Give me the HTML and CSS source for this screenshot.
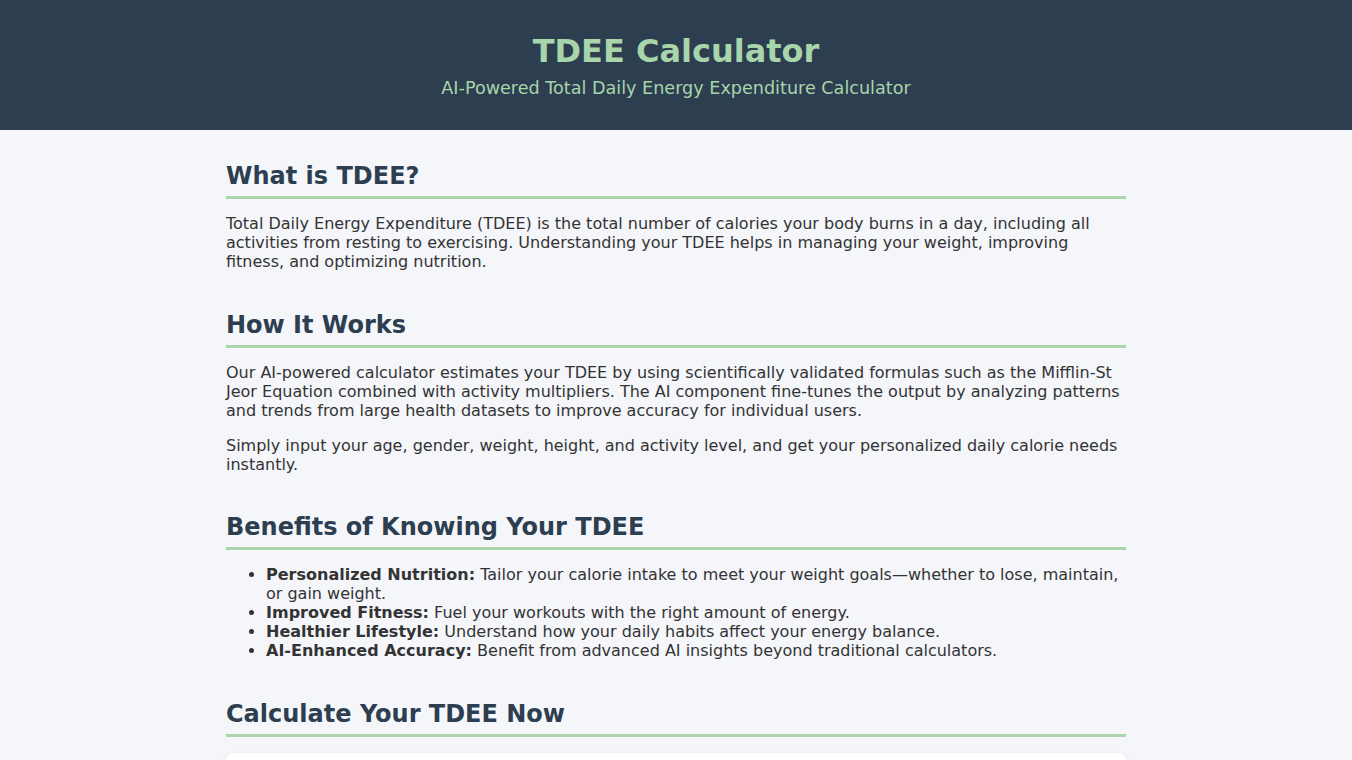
FILE: index.html
```html
<!DOCTYPE html>
<html lang="en">
<head>
<meta charset="utf-8">
<title>TDEE Calculator</title>
<link rel="stylesheet" href="styles.css">
</head>
<body>
<header class="site-header">
  <h1 class="site-title">TDEE Calculator</h1>
  <p class="site-subtitle">AI-Powered Total Daily Energy Expenditure Calculator</p>
</header>
<main class="container">
  <section class="section">
    <h2 class="section-title">What is TDEE?</h2>
    <p class="text">Total Daily Energy Expenditure (TDEE) is the total number of calories your body burns in a day, including all activities from resting to exercising. Understanding your TDEE helps in managing your weight, improving fitness, and optimizing nutrition.</p>
  </section>
  <section class="section">
    <h2 class="section-title">How It Works</h2>
    <p class="text">Our AI-powered calculator estimates your TDEE by using scientifically validated formulas such as the Mifflin-St Jeor Equation combined with activity multipliers. The AI component fine-tunes the output by analyzing patterns and trends from large health datasets to improve accuracy for individual users.</p>
    <p class="text">Simply input your age, gender, weight, height, and activity level, and get your personalized daily calorie needs instantly.</p>
  </section>
  <section class="section">
    <h2 class="section-title">Benefits of Knowing Your TDEE</h2>
    <ul class="benefits">
      <li><strong>Personalized Nutrition:</strong> Tailor your calorie intake to meet your weight goals—whether to lose, maintain, or gain weight.</li>
      <li><strong>Improved Fitness:</strong> Fuel your workouts with the right amount of energy.</li>
      <li><strong>Healthier Lifestyle:</strong> Understand how your daily habits affect your energy balance.</li>
      <li><strong>AI-Enhanced Accuracy:</strong> Benefit from advanced AI insights beyond traditional calculators.</li>
    </ul>
  </section>
  <section class="section">
    <h2 class="section-title">Calculate Your TDEE Now</h2>
    <div class="card">
      <p class="text">&nbsp;</p>
    </div>
  </section>
</main>
</body>
</html>
```

FILE: styles.css
```css
html, body {
  margin: 0;
  padding: 0;
}
body {
  background: #f4f6fa;
  color: #333333;
  font-family: "DejaVu Sans", Verdana, sans-serif;
  font-size: 16px;
}
.site-header {
  background: #2c3e50;
  text-align: center;
  padding: 32px 20px 31px;
}
.site-title {
  margin: 0;
  color: #a8d5aa;
  font-size: 32px;
  font-weight: bold;
  line-height: 38px;
}
.site-subtitle {
  margin: 8px 0 0;
  color: #a8d5aa;
  font-size: 17.6px;
  line-height: 21px;
}
.container {
  max-width: 900px;
  margin: 0 auto;
  padding: 32px 0 0;
  display: flex;
  flex-direction: column;
  gap: 39.5px;
}
.section-title {
  margin: 0 0 15px;
  color: #2c3e50;
  font-size: 24px;
  font-weight: bold;
  line-height: 28px;
  padding-bottom: 6px;
  border-bottom: 3px solid #a8d5aa;
}
.text {
  margin: 0 0 16px;
  line-height: 19px;
}
.text:last-child {
  margin-bottom: 0;
}
.benefits {
  margin: 0;
  padding-left: 40px;
  line-height: 19px;
}
.card {
  margin-top: 16px;
  background: #ffffff;
  border-radius: 8px;
  box-shadow: 0 2px 6px rgba(0, 0, 0, 0.08);
  padding: 24px;
  min-height: 200px;
}
```
